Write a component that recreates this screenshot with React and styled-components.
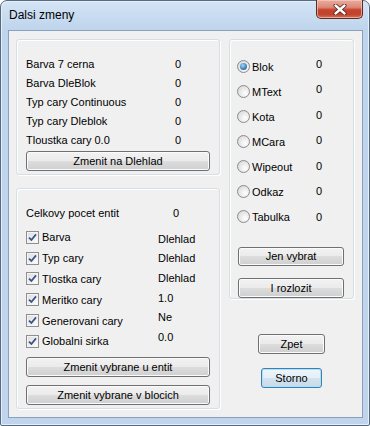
import React from "react";
import styled, { createGlobalStyle, css } from "styled-components";

const GlobalStyle = createGlobalStyle`
  html, body {
    margin: 0;
    padding: 0;
    background: #ffffff;
  }
  body {
    font-family: "Liberation Sans", Arial, sans-serif;
    font-size: 11px;
    color: #000;
  }
`;

const Window = styled.div`
  width: 370px;
  height: 426px;
  box-sizing: border-box;
  border: 1px solid #566a82;
  border-radius: 7px 7px 2px 2px;
  padding: 0 6px 7px 7px;
  background: linear-gradient(#d4e4f5 0px, #bfd5ed 28px, #c0d5ec 100%);
  box-shadow: inset 1px 1px 0 #e6eff9, inset -1px -1px 0 #e6eff9;
  display: flex;
  flex-direction: column;
`;

const TitleBar = styled.div`
  height: 29px;
  display: flex;
  justify-content: space-between;
  align-items: flex-start;
  flex-shrink: 0;
`;

const Title = styled.span`
  font-family: "Liberation Sans", Arial, sans-serif;
  font-size: 12px;
  line-height: 16px;
  padding: 6px 0 0 1px;
  color: #000;
`;

const CloseButton = styled.div`
  width: 47px;
  height: 19px;
  margin-top: -1px;
  box-sizing: border-box;
  border: 1px solid #5a2c26;
  border-top: none;
  border-radius: 0 0 5px 5px;
  background: linear-gradient(
    #e9ad9f 0%,
    #dc8a78 40%,
    #c4432e 55%,
    #c0432d 80%,
    #d6735e 100%
  );
  box-shadow: inset 0 0 0 1px rgba(255, 210, 200, 0.6);
  display: flex;
  align-items: center;
  justify-content: center;
`;

const Client = styled.div`
  flex: 1;
  box-sizing: border-box;
  border: 1px solid #8aa1bd;
  background: #f0f0f0;
  padding: 8px 8px 0 7px;
  display: flex;
  gap: 9px;
`;

const LeftColumn = styled.div`
  width: 204px;
  display: flex;
  flex-direction: column;
  gap: 13px;
`;

const RightColumn = styled.div`
  width: 125px;
  display: flex;
  flex-direction: column;
  align-items: center;
`;

const Group = styled.div`
  box-sizing: border-box;
  align-self: stretch;
  height: ${({ $height }) => $height}px;
  border: 1px solid #d5dfe5;
  border-radius: 3px;
  box-shadow: inset 1px 1px 0 #ffffff, 1px 1px 0 #ffffff;
  padding: ${({ $pad }) => $pad};
  display: flex;
  flex-direction: column;
`;

const InfoRow = styled.div`
  height: 19px;
  display: grid;
  grid-template-columns: ${({ $labelWidth }) => $labelWidth}px auto;
  align-items: center;
  white-space: nowrap;
`;

const Button = styled.div`
  box-sizing: border-box;
  width: ${({ $width }) => $width}px;
  height: ${({ $height }) => $height || 20}px;
  margin-top: ${({ $top }) => $top || 0}px;
  margin-left: ${({ $left }) => $left || 0}px;
  border: 1px solid #707070;
  border-radius: 3px;
  background: linear-gradient(#f2f2f2 0%, #ebebeb 50%, #dddddd 50%, #cfcfcf 100%);
  box-shadow: inset 0 0 0 1px #fbfbfb;
  display: flex;
  align-items: center;
  justify-content: center;
  white-space: nowrap;
  ${({ $default }) =>
    $default &&
    css`
      border-color: #3c7fb1;
      background: linear-gradient(#eef6fb 0%, #e3eef6 50%, #d3e3ef 50%, #c8dbe9 100%);
      box-shadow: inset 0 0 0 1px #aee0f8;
    `}
`;

const ChoiceTable = styled.div`
  display: flex;
  margin-top: ${({ $top }) => $top}px;
`;

const ChoiceColumn = styled.div`
  width: ${({ $width }) => $width}px;
  display: flex;
  flex-direction: column;
  padding-top: ${({ $top }) => $top || 0}px;
`;

const ChoiceItem = styled.div`
  height: ${({ $rowHeight }) => $rowHeight}px;
  display: flex;
  align-items: center;
  gap: ${({ $gap }) => $gap || 0}px;
  white-space: nowrap;
`;

const CheckBox = styled.span`
  box-sizing: border-box;
  width: 13px;
  height: 13px;
  border: 1px solid #8e8f8f;
  background: linear-gradient(135deg, #dcdcdc, #ffffff);
  box-shadow: inset 0 0 0 1px #f4f4f4;
  display: flex;
  align-items: center;
  justify-content: center;
  flex-shrink: 0;
`;

const Radio = styled.span`
  box-sizing: border-box;
  width: 13px;
  height: 13px;
  border-radius: 50%;
  border: 1px solid #8b8b8b;
  background: radial-gradient(circle at 65% 65%, #ffffff 0%, #e6e6e6 55%, #cfcfcf 100%);
  display: flex;
  align-items: center;
  justify-content: center;
  flex-shrink: 0;
  ${({ $checked }) =>
    $checked &&
    css`
      &::after {
        content: "";
        width: 7px;
        height: 7px;
        border-radius: 50%;
        background: radial-gradient(circle at 40% 35%, #a8d8f8 0%, #3f87c0 55%, #1e4f7c 100%);
      }
    `}
`;

const BottomButtons = styled.div`
  display: flex;
  flex-direction: column;
  align-items: center;
  gap: 14px;
  margin-top: ${({ $top }) => $top}px;
`;

const CheckMark = () => (
  <svg width="9" height="9" viewBox="0 0 9 9">
    <path d="M1 4.6 L3.4 7 L8 1.4" fill="none" stroke="#3d5488" strokeWidth="1.8" />
  </svg>
);

const CloseGlyph = () => (
  <svg width="14" height="11" viewBox="0 0 14 11">
    <path d="M2.5 1.5 L11.5 9.5 M11.5 1.5 L2.5 9.5" stroke="#4a1d17" strokeWidth="4" strokeLinecap="round" />
    <path d="M2.5 1.5 L11.5 9.5 M11.5 1.5 L2.5 9.5" stroke="#ffffff" strokeWidth="2.4" strokeLinecap="round" />
  </svg>
);

const counts = [
  ["Barva 7 cerna", "0"],
  ["Barva DleBlok", "0"],
  ["Typ cary Continuous", "0"],
  ["Typ cary Dleblok", "0"],
  ["Tloustka cary 0.0", "0"],
];

const properties = [
  ["Barva", "Dlehlad"],
  ["Typ cary", "Dlehlad"],
  ["Tlostka cary", "Dlehlad"],
  ["Meritko cary", "1.0"],
  ["Generovani cary", "Ne"],
  ["Globalni sirka", "0.0"],
];

const kinds = ["Blok", "MText", "Kota", "MCara", "Wipeout", "Odkaz", "Tabulka"];

const App = () => {
  return (
    <>
      <GlobalStyle />
      <Window>
        <TitleBar>
          <Title>Dalsi zmeny</Title>
          <CloseButton>
            <CloseGlyph />
          </CloseButton>
        </TitleBar>

        <Client>
          <LeftColumn>
            <Group $height={136} $pad="14px 9px 0 9px">
              {counts.map(([label, value]) => (
                <InfoRow key={label} $labelWidth={149}>
                  <span>{label}</span>
                  <span>{value}</span>
                </InfoRow>
              ))}
              <Button $width={184} $top={2}>
                Zmenit na Dlehlad
              </Button>
            </Group>

            <Group $height={221} $pad="14px 9px 0 9px">
              <InfoRow $labelWidth={147}>
                <span>Celkovy pocet entit</span>
                <span>0</span>
              </InfoRow>
              <ChoiceTable $top={5}>
                <ChoiceColumn $width={132}>
                  {properties.map(([label]) => (
                    <ChoiceItem key={label} $rowHeight={20.8} $gap={3}>
                      <CheckBox>
                        <CheckMark />
                      </CheckBox>
                      <span>{label}</span>
                    </ChoiceItem>
                  ))}
                </ChoiceColumn>
                <ChoiceColumn $width={50} $top={2}>
                  {properties.map(([label, value]) => (
                    <ChoiceItem key={label} $rowHeight={19.6}>
                      {value}
                    </ChoiceItem>
                  ))}
                </ChoiceColumn>
              </ChoiceTable>
              <Button $width={184} $top={5}>
                Zmenit vybrane u entit
              </Button>
              <Button $width={184} $top={8}>
                Zmenit vybrane v blocich
              </Button>
            </Group>
          </LeftColumn>

          <RightColumn>
            <Group $height={260} $pad="11px 7px 0 7px">
              <ChoiceTable $top={0}>
                <ChoiceColumn $width={79} $top={3}>
                  {kinds.map((kind, i) => (
                    <ChoiceItem key={kind} $rowHeight={25} $gap={2}>
                      <Radio $checked={i === 0} />
                      <span>{kind}</span>
                    </ChoiceItem>
                  ))}
                </ChoiceColumn>
                <ChoiceColumn $width={20}>
                  {kinds.map((kind) => (
                    <ChoiceItem key={kind} $rowHeight={25.5}>
                      0
                    </ChoiceItem>
                  ))}
                </ChoiceColumn>
              </ChoiceTable>
              <Button $width={106} $left={1} $top={17}>
                Jen vybrat
              </Button>
              <Button $width={106} $left={1} $top={12}>
                I rozlozit
              </Button>
            </Group>
            <BottomButtons $top={35}>
              <Button $width={67}>Zpet</Button>
              <Button $width={61} $default>
                Storno
              </Button>
            </BottomButtons>
          </RightColumn>
        </Client>
      </Window>
    </>
  );
};

export default App;
